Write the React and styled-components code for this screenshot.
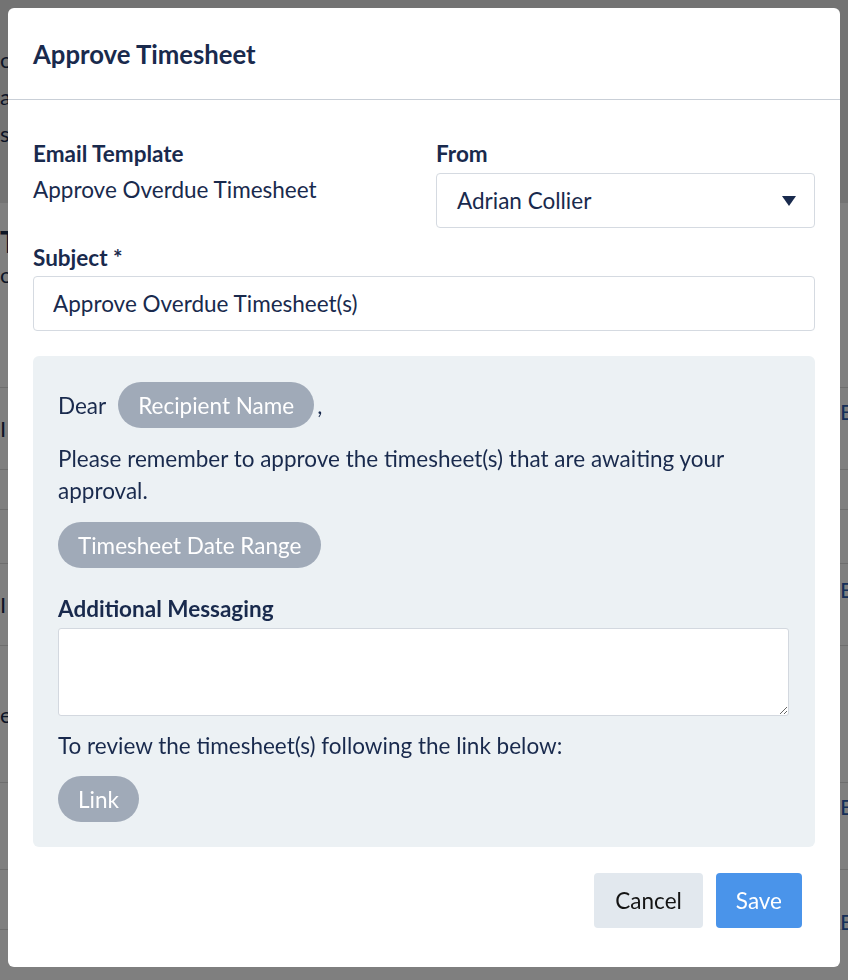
import React from "react";
import styled, { createGlobalStyle } from "styled-components";

const GlobalStyle = createGlobalStyle`
  html, body {
    margin: 0;
    padding: 0;
    overflow: hidden;
  }
  body {
    font-family: Lato, "Open Sans", sans-serif;
    color: #192a4d;
    background: #ffffff;
  }
  * {
    box-sizing: border-box;
  }
`;

const navy = "#192a4d";
const textSize = "22.5px";

// page behind the dialog
const Page = styled.div`
  width: calc(100% + 52px);
  height: 980px;
  background: #ffffff;
`;

const TopBand = styled.div`
  height: 203px;
  background: #e6e6e6;
  padding-top: 46px;
  display: flex;
  flex-direction: column;
  gap: 10px;
  font-size: 22px;
`;

const TitleArea = styled.div`
  height: 134px;
  padding-top: 20px;
  font-size: 22px;
`;

const PageHeading = styled.div`
  font-size: 30px;
  font-weight: 700;
  margin-bottom: 2px;
`;

const PageRow = styled.div`
  display: grid;
  grid-template-columns: 1fr 60px;
  align-items: center;
  height: ${(p) => p.$h}px;
  border-bottom: 1px solid #dcdcdc;
  font-size: 22px;
`;

const EditLink = styled.span`
  align-self: start;
  padding-top: ${(p) => p.$top || 0}px;
  color: #2a5db0;
  font-size: 22px;
`;

// modal
const Overlay = styled.div`
  position: fixed;
  inset: 0;
  background: rgba(0, 0, 0, 0.5);
  padding: 8px;
  display: flex;
  align-items: flex-start;
`;

const Dialog = styled.div`
  width: 100%;
  background: #ffffff;
  border-radius: 6px;
  display: flex;
  flex-direction: column;
`;

const Header = styled.div`
  padding: 32px 25px 30px;
  border-bottom: 1px solid #c9cfd7;
`;

const Title = styled.h2`
  margin: 0;
  font-size: 25.7px;
  line-height: 29px;
  font-weight: 700;
  color: ${navy};
`;

const Body = styled.div`
  padding: 42px 25px 0;
`;

const TwoCols = styled.div`
  display: grid;
  grid-template-columns: 1fr 1fr;
  column-gap: 24px;
`;

const Field = styled.div`
  display: flex;
  flex-direction: column;
  margin-top: ${(p) => p.$mt || 0}px;
`;

const Label = styled.div`
  font-size: ${textSize};
  line-height: 24px;
  font-weight: 700;
  color: ${navy};
  margin-bottom: ${(p) => p.$mb || 0}px;
`;

const Value = styled.div`
  font-size: ${textSize};
  line-height: 24px;
  color: ${navy};
`;

const SelectBox = styled.div`
  height: 55px;
  border: 1px solid #d5dae1;
  border-radius: 4px;
  padding: 0 18px 0 20px;
  display: flex;
  align-items: center;
  justify-content: space-between;
  font-size: ${textSize};
  color: ${navy};
  background: #ffffff;
`;

const TextInput = styled.input`
  height: 55px;
  border: 1px solid #d5dae1;
  border-radius: 4px;
  padding: 0 19px;
  font-family: Lato, "Open Sans", sans-serif;
  font-size: ${textSize};
  color: ${navy};
  outline: none;
`;

const Panel = styled.div`
  margin-top: 25px;
  background: #ecf1f4;
  border-radius: 6px;
  padding: 26px 26px 25px 25px;
  font-size: ${textSize};
  color: ${navy};
`;

const Greeting = styled.div`
  display: flex;
  align-items: center;
  height: 46px;
`;

const Chip = styled.span`
  display: inline-flex;
  align-items: center;
  height: 46px;
  padding: 0 20px;
  border-radius: 23px;
  background: #a0aab8;
  color: #ffffff;
  font-size: ${textSize};
  margin-left: ${(p) => p.$ml || 0}px;
  margin-right: ${(p) => p.$mr || 0}px;
`;

const ChipLine = styled.div`
  display: flex;
  margin-top: ${(p) => p.$mt || 0}px;
`;

const Paragraph = styled.p`
  margin: ${(p) => p.$mt || 0}px 0 0;
  line-height: ${(p) => p.$lh || 24}px;
  font-size: ${textSize};
`;

const SectionLabel = styled(Label)`
  margin-top: 29px;
`;

const MessageArea = styled.textarea`
  display: block;
  width: 100%;
  height: 88px;
  margin-top: 7px;
  border: 1px solid #d3d8df;
  border-radius: 3px;
  background: #ffffff;
  font-family: Lato, "Open Sans", sans-serif;
  font-size: 20px;
  padding: 10px 14px;
  resize: vertical;
  outline: none;
`;

const Footer = styled.div`
  display: flex;
  justify-content: flex-end;
  gap: 13px;
  padding: 26px 38px 39px 25px;
`;

const Button = styled.button`
  height: 55px;
  padding: 0 ${(p) => (p.$primary ? 20 : 21)}px;
  border: none;
  border-radius: 4px;
  font-family: Lato, "Open Sans", sans-serif;
  font-size: ${textSize};
  cursor: pointer;
  background: ${(p) => (p.$primary ? "#4a94ea" : "#e2e8ee")};
  color: ${(p) => (p.$primary ? "#ffffff" : "#141414")};
`;

const Caret = () => (
  <svg width="14" height="10" viewBox="0 0 14 10">
    <path d="M0 0 H14 L7 10 Z" fill={navy} />
  </svg>
);

const rows = [
  { h: 51, left: "", edit: "" },
  { h: 82, left: "I", edit: "Edit", top: 10 },
  { h: 40, left: "", edit: "" },
  { h: 54, left: "", edit: "" },
  { h: 82, left: "I", edit: "Edit", top: 12 },
  { h: 137, left: "es", edit: "" },
  { h: 87, left: "", edit: "Edit", top: 10 },
  { h: 60, left: "", edit: "Edit", top: 38 },
];

export default function App() {
  return (
    <>
      <GlobalStyle />
      <Page>
        <TopBand>
          <span>o</span>
          <span>a</span>
          <span>s</span>
        </TopBand>
        <TitleArea>
          <PageHeading>T</PageHeading>
          <div>o'</div>
        </TitleArea>
        {rows.map((r, i) => (
          <PageRow key={i} $h={r.h}>
            <span>{r.left}</span>
            <EditLink $top={r.top}>{r.edit}</EditLink>
          </PageRow>
        ))}
      </Page>

      <Overlay>
        <Dialog>
          <Header>
            <Title>Approve Timesheet</Title>
          </Header>

          <Body>
            <TwoCols>
              <Field>
                <Label $mb={12}>Email Template</Label>
                <Value>Approve Overdue Timesheet</Value>
              </Field>
              <Field>
                <Label $mb={7}>From</Label>
                <SelectBox>
                  <span>Adrian Collier</span>
                  <Caret />
                </SelectBox>
              </Field>
            </TwoCols>

            <Field $mt={18}>
              <Label $mb={6}>Subject *</Label>
              <TextInput defaultValue="Approve Overdue Timesheet(s)" />
            </Field>

            <Panel>
              <Greeting>
                Dear
                <Chip $ml={12} $mr={3}>Recipient Name</Chip>,
              </Greeting>
              <Paragraph $mt={15} $lh={32}>
                Please remember to approve the timesheet(s) that are awaiting your approval.
              </Paragraph>
              <ChipLine $mt={15}>
                <Chip>Timesheet Date Range</Chip>
              </ChipLine>
              <SectionLabel>Additional Messaging</SectionLabel>
              <MessageArea />
              <Paragraph $mt={18}>
                To review the timesheet(s) following the link below:
              </Paragraph>
              <ChipLine $mt={18}>
                <Chip>Link</Chip>
              </ChipLine>
            </Panel>
          </Body>

          <Footer>
            <Button>Cancel</Button>
            <Button $primary>Save</Button>
          </Footer>
        </Dialog>
      </Overlay>
    </>
  );
}
